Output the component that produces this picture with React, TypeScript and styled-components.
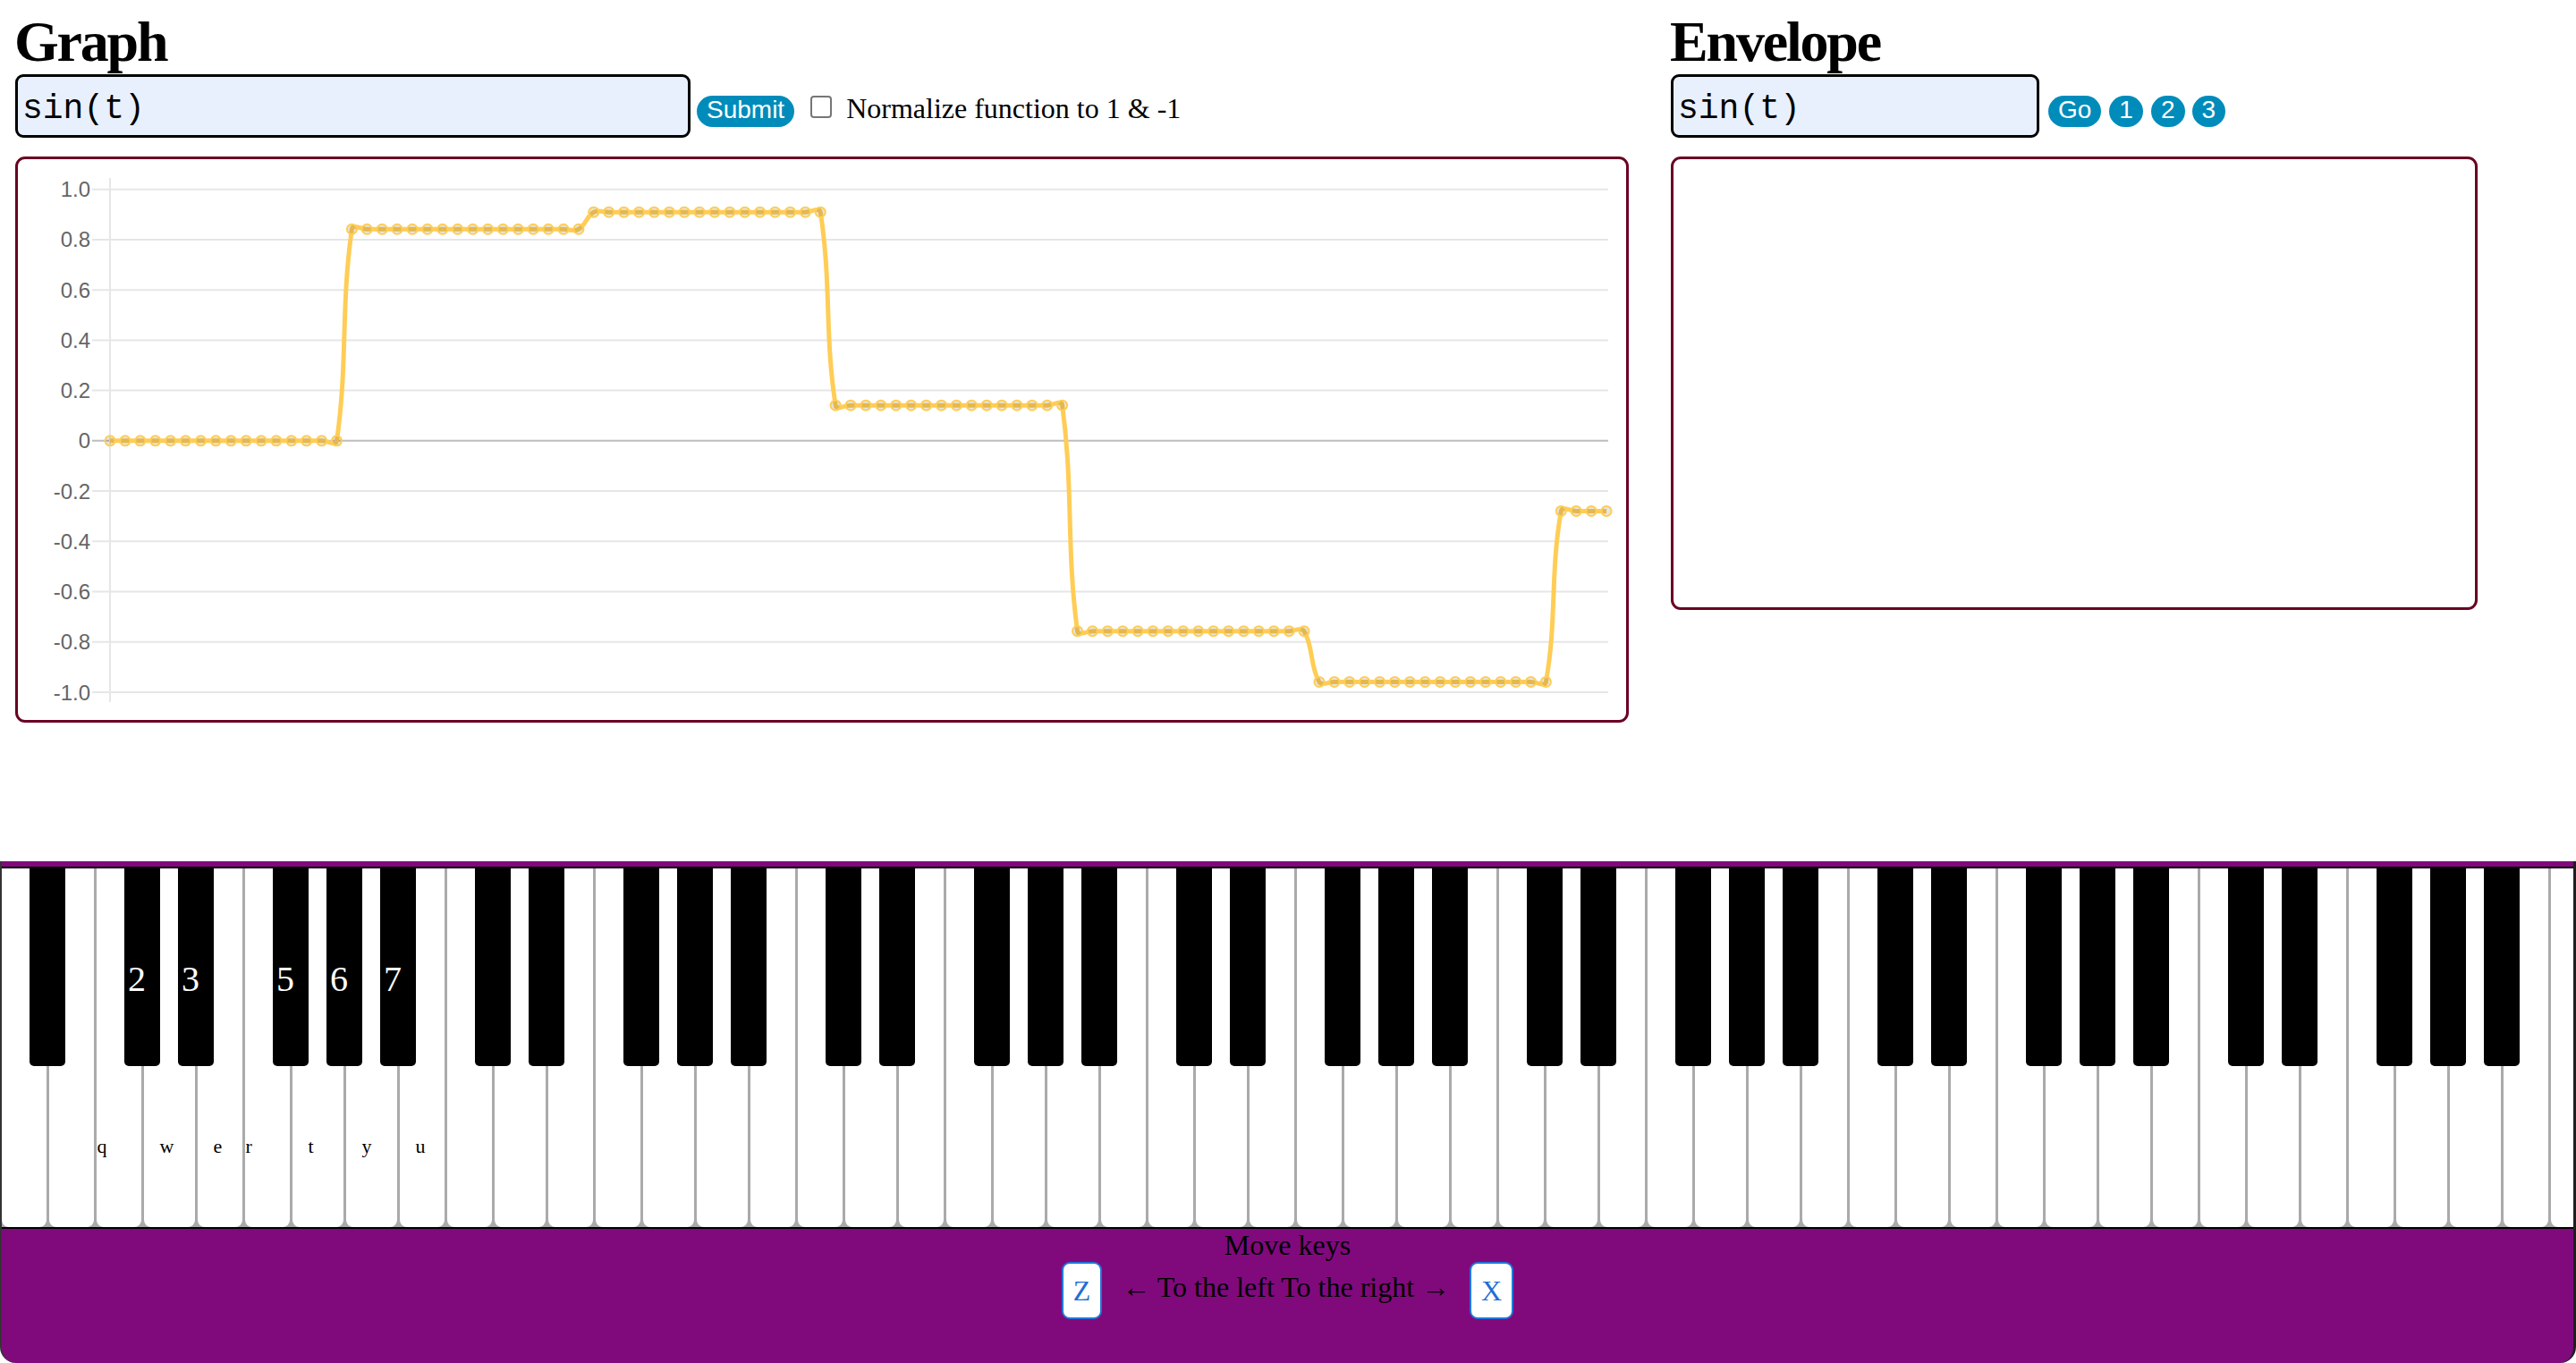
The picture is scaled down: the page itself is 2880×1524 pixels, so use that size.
import React from 'react'
import styled, { createGlobalStyle } from 'styled-components'

interface Point {
  x: number
  y: number
}

interface WhiteKeyData {
  id: string
  width: number
  label?: string
  indent: boolean
}

interface BlackKeyData {
  id: string
  left: number
  label?: string
}

// chart geometry (page pixels)
const BOX_X = 20
const BOX_Y = 178
const GRID_TOP = 211.7
const GRID_BOTTOM = 774
const AXIS_X = 123
const PLOT_RIGHT = 1798
const LAST_X = 1796

const toY = (v: number) => GRID_TOP + ((1 - v) / 2) * (GRID_BOTTOM - GRID_TOP)

const ticks = [1, 0.8, 0.6, 0.4, 0.2, 0, -0.2, -0.4, -0.6, -0.8, -1]

const samples: Point[] = Array.from({ length: 100 }, (_, i) => ({
  x: AXIS_X + (i * (LAST_X - AXIS_X)) / 99,
  y: toY(Math.sin(Math.floor(i / 16))),
}))

const splinePath = (pts: Point[], tension = 0.4) => {
  const ctrl = pts.map((p, i) => {
    const prev = pts[i - 1] ?? p
    const next = pts[i + 1] ?? p
    const d01 = Math.hypot(p.x - prev.x, p.y - prev.y)
    const d12 = Math.hypot(next.x - p.x, next.y - p.y)
    const total = d01 + d12 || 1
    const fa = (tension * d01) / total
    const fb = (tension * d12) / total
    return {
      in: { x: p.x - fa * (next.x - prev.x), y: p.y - fa * (next.y - prev.y) },
      out: { x: p.x + fb * (next.x - prev.x), y: p.y + fb * (next.y - prev.y) },
    }
  })
  let d = `M${pts[0].x} ${pts[0].y}`
  for (let i = 1; i < pts.length; i++) {
    const a = ctrl[i - 1].out
    const b = ctrl[i].in
    d += ` C${a.x} ${a.y} ${b.x} ${b.y} ${pts[i].x} ${pts[i].y}`
  }
  return d
}

// piano layout: white key widths per octave, and whether a black key follows
const OCTAVE = [
  { note: 'C', width: 53, blackAfter: true },
  { note: 'D', width: 60, blackAfter: true },
  { note: 'E', width: 53, blackAfter: false },
  { note: 'F', width: 53, blackAfter: true },
  { note: 'G', width: 60, blackAfter: true },
  { note: 'A', width: 60, blackAfter: true },
  { note: 'B', width: 53, blackAfter: false },
]

const whiteLabels: Record<string, string> = { C1: 'q', D1: 'w', E1: 'e', F1: 'r', G1: 't', A1: 'y', B1: 'u' }
const blackLabels: Record<string, string> = { C1: '2', D1: '3', F1: '5', G1: '6', A1: '7' }

const BED_LEFT = 2
const SEP = 3

const buildKeys = () => {
  const seq = [
    { note: 'A', octave: 0, width: 60, blackAfter: true },
    { note: 'B', octave: 0, width: 53, blackAfter: false },
  ]
  for (let o = 1; o <= 7; o++) OCTAVE.forEach(k => seq.push({ ...k, octave: o }))
  seq.push({ note: 'C', octave: 8, width: 53, blackAfter: false })

  const whites: WhiteKeyData[] = []
  const blacks: BlackKeyData[] = []
  let right = -7
  let prevBlack = false
  seq.forEach(k => {
    const left = right
    right = left + k.width
    const id = `${k.note}${k.octave}`
    const start = Math.max(left + SEP / 2, BED_LEFT)
    whites.push({ id, width: right - SEP / 2 - start, label: whiteLabels[id], indent: prevBlack })
    if (k.blackAfter) blacks.push({ id: `${id}#`, left: right - 20 - BED_LEFT, label: blackLabels[id] })
    prevBlack = k.blackAfter
  })
  return { whites, blacks }
}

const keys = buildKeys()

function LineChart() {
  return (
    <ChartSvg>
      <g transform={`translate(${-BOX_X} ${-BOX_Y})`}>
        {ticks.map(v => (
          <g key={v}>
            <line
              x1={103}
              x2={PLOT_RIGHT}
              y1={toY(v)}
              y2={toY(v)}
              stroke={v === 0 ? '#bdbdbd' : '#e6e6e6'}
              strokeWidth={2}
            />
            <TickLabel x={101} y={toY(v) + 8.5} textAnchor="end">
              {v === 0 ? '0' : v.toFixed(1)}
            </TickLabel>
          </g>
        ))}
        <line x1={AXIS_X} x2={AXIS_X} y1={199} y2={785} stroke="#e6e6e6" strokeWidth={2} />
        <path d={splinePath(samples)} fill="none" stroke="rgb(255, 205, 86)" strokeWidth={5} />
        {samples.map((p, i) => (
          <circle
            key={i}
            cx={p.x}
            cy={p.y}
            r={5.5}
            fill="rgba(0, 0, 0, 0.1)"
            stroke="rgb(255, 205, 86)"
            strokeWidth={2}
          />
        ))}
      </g>
    </ChartSvg>
  )
}

function Keyboard() {
  return (
    <Piano>
      <KeyBed>
        {keys.whites.map(k => (
          <WhiteKey key={k.id} $width={k.width} $indent={k.indent}>
            {k.label}
          </WhiteKey>
        ))}
        {keys.blacks.map(k => (
          <BlackKey key={k.id} style={{ left: k.left }}>
            {k.label}
          </BlackKey>
        ))}
      </KeyBed>
      <Footer>
        <div>Move keys</div>
        <MoveRow>
          <KeyCap>Z</KeyCap>
          <MoveText>← To the left To the right →</MoveText>
          <KeyCap>X</KeyCap>
        </MoveRow>
      </Footer>
    </Piano>
  )
}

export default function App() {
  return (
    <>
      <GlobalStyle />
      <Top>
        <Column $width={1804}>
          <Heading>Graph</Heading>
          <FormRow>
            <FnInput $width={755} defaultValue="sin(t)" />
            <Pill $gap={7}>Submit</Pill>
            <Check type="checkbox" />
            <CheckLabel>Normalize function to 1 &amp; -1</CheckLabel>
          </FormRow>
          <ChartBox $height={633}>
            <LineChart />
          </ChartBox>
        </Column>
        <Column $width={902}>
          <Heading>Envelope</Heading>
          <FormRow>
            <FnInput $width={412} defaultValue="sin(t)" />
            <Pill $gap={10}>Go</Pill>
            <Pill $gap={9}>1</Pill>
            <Pill $gap={9}>2</Pill>
            <Pill $gap={8}>3</Pill>
          </FormRow>
          <ChartBox $height={507} />
        </Column>
      </Top>
      <Keyboard />
    </>
  )
}

const GlobalStyle = createGlobalStyle`
  html, body {
    margin: 0;
    padding: 0;
    background: #fff;
  }

  body {
    font-family: 'Liberation Serif', 'Times New Roman', serif;
    overflow: hidden;
  }

  #root {
    min-height: 100vh;
    display: flex;
    flex-direction: column;
  }
`

const Top = styled.div`
  display: flex;
  gap: 47px;
  padding: 11px 0 0 17px;
`

const Column = styled.section<{ $width: number }>`
  flex: none;
  width: ${p => p.$width}px;
`

const Heading = styled.h1`
  margin: 0 0 0 -1px;
  font: bold 64px/72px 'Liberation Serif', 'Times New Roman', serif;
  letter-spacing: -2.2px;
  color: #000;
`

const FormRow = styled.div`
  display: flex;
  align-items: baseline;
`

const FnInput = styled.input<{ $width: number }>`
  flex: none;
  width: ${p => p.$width}px;
  height: 71px;
  box-sizing: border-box;
  margin: 0;
  padding: 9px 5px 3px;
  border: 3px solid #000;
  border-radius: 9px;
  background: #e8f0fe;
  color: #000;
  font: 38px 'Liberation Mono', 'Courier New', monospace;
  outline: none;
`

const Pill = styled.button<{ $gap: number }>`
  flex: none;
  margin: 0 0 0 ${p => p.$gap}px;
  padding: 0 11px 3px;
  border: none;
  border-radius: 999px;
  background: #008cba;
  color: #fff;
  font: 28px 'Liberation Sans', Arial, sans-serif;
  line-height: normal;
  cursor: pointer;
`

const Check = styled.input`
  appearance: none;
  flex: none;
  width: 24px;
  height: 25px;
  margin: 0 0 0 18px;
  border: 2px solid #767676;
  border-radius: 4px;
  background: #fff;
`

const CheckLabel = styled.span`
  margin-left: 16px;
  font: 32px 'Liberation Serif', 'Times New Roman', serif;
  color: #000;
`

const ChartBox = styled.div<{ $height: number }>`
  margin-top: 21px;
  height: ${p => p.$height}px;
  box-sizing: border-box;
  border: 3px solid #6a0023;
  border-radius: 11px;
  overflow: hidden;
  background: #fff;
`

const ChartSvg = styled.svg`
  display: block;
  width: 100%;
  height: 100%;
`

const TickLabel = styled.text`
  font: 24px 'Liberation Sans', Arial, sans-serif;
  fill: #666;
`

const Piano = styled.div`
  margin-top: auto;
  padding-top: 6px;
  background: #800a7c;
  border-left: 2px solid #333;
  border-right: 3px solid #1e1e1e;
  border-radius: 0 0 18px 18px;
  overflow: hidden;
`

const KeyBed = styled.div`
  position: relative;
  display: flex;
  gap: ${SEP}px;
  height: 401px;
  background: #aaa;
  border-top: 2px solid #000;
  border-bottom: 2px solid #000;
  overflow: hidden;
`

const WhiteKey = styled.div<{ $width: number; $indent: boolean }>`
  flex: none;
  width: ${p => p.$width}px;
  box-sizing: border-box;
  padding: 298px 0 0 ${p => (p.$indent ? 18 : 1)}px;
  background: #fff;
  border-radius: 0 0 8px 8px;
  font: 22px 'Liberation Serif', 'Times New Roman', serif;
  color: #000;
`

const BlackKey = styled.div`
  position: absolute;
  top: 0;
  width: 40px;
  height: 221px;
  box-sizing: border-box;
  padding: 100px 0 0 4px;
  background: #000;
  border-radius: 0 0 5px 5px;
  font: 40px 'Liberation Serif', 'Times New Roman', serif;
  color: #fff;
`

const Footer = styled.div`
  display: flex;
  flex-direction: column;
  align-items: center;
  padding-bottom: 49px;
  font: 32px 'Liberation Serif', 'Times New Roman', serif;
  color: #000;
`

const MoveRow = styled.div`
  display: flex;
  align-items: center;
  gap: 22px;
  height: 64px;
`

const KeyCap = styled.span`
  display: flex;
  align-items: center;
  height: 64px;
  box-sizing: border-box;
  padding: 0 11px;
  border: 2px solid #1f78d8;
  border-radius: 9px;
  background: #fff;
  color: #1f6fd4;
`

const MoveText = styled.span`
  padding-bottom: 7px;
`
